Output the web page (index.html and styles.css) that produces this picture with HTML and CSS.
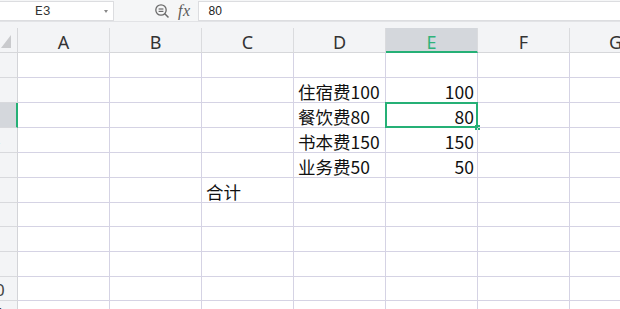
FILE: index.html
```html
<!DOCTYPE html>
<html lang="zh-CN">
<head>
<meta charset="utf-8">
<title>Sheet</title>
<link rel="stylesheet" href="styles.css">
</head>
<body>
<div class="toolbar">
  <div class="namebox"><span class="name">E3</span><span class="dd"></span></div>
  <svg class="zoomicon" width="16" height="16" viewBox="0 0 16 16">
    <circle cx="7" cy="7" r="5.2" fill="none" stroke="#6b6b6b" stroke-width="1.3"/>
    <line x1="4.6" y1="6" x2="9.4" y2="6" stroke="#6b6b6b" stroke-width="1.2"/>
    <line x1="4.6" y1="8.4" x2="9.4" y2="8.4" stroke="#6b6b6b" stroke-width="1.2"/>
    <line x1="10.8" y1="10.8" x2="14.5" y2="14.5" stroke="#6b6b6b" stroke-width="1.5"/>
  </svg>
  <span class="fx">fx</span>
  <div class="formula">80</div>
</div>
<div class="spacer"></div>
<div class="grid">
  <div class="ch corner"><span class="tri"></span></div>
  <div class="ch">A</div><div class="ch">B</div><div class="ch">C</div><div class="ch">D</div>
  <div class="ch sel">E</div><div class="ch">F</div><div class="ch">G</div>

  <div class="rh">1</div><div class="c"></div><div class="c"></div><div class="c"></div><div class="c"></div><div class="c"></div><div class="c"></div><div class="c"></div>
  <div class="rh">2</div><div class="c"></div><div class="c"></div><div class="c"></div><div class="c">住宿费100</div><div class="c n">100</div><div class="c"></div><div class="c"></div>
  <div class="rh rsel">3</div><div class="c"></div><div class="c"></div><div class="c"></div><div class="c">餐饮费80</div><div class="c n active">80<span class="box"></span><span class="handle"></span></div><div class="c"></div><div class="c"></div>
  <div class="rh">4</div><div class="c"></div><div class="c"></div><div class="c"></div><div class="c">书本费150</div><div class="c n">150</div><div class="c"></div><div class="c"></div>
  <div class="rh">5</div><div class="c"></div><div class="c"></div><div class="c"></div><div class="c">业务费50</div><div class="c n">50</div><div class="c"></div><div class="c"></div>
  <div class="rh">6</div><div class="c"></div><div class="c"></div><div class="c">合计</div><div class="c"></div><div class="c"></div><div class="c"></div><div class="c"></div>
  <div class="rh">7</div><div class="c"></div><div class="c"></div><div class="c"></div><div class="c"></div><div class="c"></div><div class="c"></div><div class="c"></div>
  <div class="rh">8</div><div class="c"></div><div class="c"></div><div class="c"></div><div class="c"></div><div class="c"></div><div class="c"></div><div class="c"></div>
  <div class="rh">9</div><div class="c"></div><div class="c"></div><div class="c"></div><div class="c"></div><div class="c"></div><div class="c"></div><div class="c"></div>
  <div class="rh">10</div><div class="c"></div><div class="c"></div><div class="c"></div><div class="c"></div><div class="c"></div><div class="c"></div><div class="c"></div>
  <div class="rh">11</div><div class="c"></div><div class="c"></div><div class="c"></div><div class="c"></div><div class="c"></div><div class="c"></div><div class="c"></div>
</div>
</body>
</html>
```
FILE: styles.css
```css
html, body {
  margin: 0;
  padding: 0;
  background: #ffffff;
  overflow: hidden;
  width: 620px;
  height: 309px;
}
body {
  font-family: "Noto Sans CJK SC", "Noto Sans", sans-serif;
}
.toolbar {
  display: flex;
  align-items: center;
  height: 21px;
  border-bottom: 1px solid #e2e3e6;
  background: #f5f6f7;
}
.namebox {
  position: relative;
  box-sizing: border-box;
  width: 116px;
  height: 20px;
  margin-left: -2px;
  margin-top: 1px;
  background: #ffffff;
  border: 1px solid #dcdde0;
  display: flex;
  align-items: center;
}
.name {
  margin-left: 36px;
  font-family: "Liberation Mono", monospace;
  font-size: 13px;
  color: #333;
}
.dd {
  position: absolute;
  right: 5px;
  top: 8px;
  width: 0;
  height: 0;
  border-left: 2.5px solid transparent;
  border-right: 2.5px solid transparent;
  border-top: 3px solid #888;
}
.zoomicon {
  margin-left: 40px;
  margin-top: 1px;
}
.fx {
  margin-left: 8px;
  font-family: "Liberation Serif", serif;
  font-style: italic;
  font-size: 16px;
  color: #5a5a5a;
  letter-spacing: 0.5px;
}
.formula {
  flex: 1;
  box-sizing: border-box;
  height: 20px;
  margin-left: 7px;
  margin-top: 1px;
  margin-right: -2px;
  background: #ffffff;
  border: 1px solid #dcdde0;
  padding-left: 10px;
  font-family: "Liberation Sans", sans-serif;
  font-size: 12px;
  line-height: 18px;
  color: #222;
}
.spacer {
  height: 6px;
  background: #f3f4f6;
}
.grid {
  display: grid;
  margin-left: -25px;
  grid-template-columns: 43px repeat(7, 92px);
  grid-template-rows: 25px 25px 25px 25px 25px 25px 25px 24px 25px 25px 24px 25px;
}
.grid > div {
  box-sizing: border-box;
}
.ch {
  background: #f3f4f6;
  border-right: 1px solid #dadbde;
  border-bottom: 1px solid #d6d7da;
  display: flex;
  align-items: center;
  justify-content: center;
  padding-top: 3px;
  font-family: "Noto Sans", sans-serif;
  font-size: 18px;
  color: #333;
}
.ch.sel {
  background: #d4d7dc;
  color: #2fb37a;
  border-bottom: 2px solid #25b076;
  padding-top: 4px;
}
.corner {
  position: relative;
  border-right: 1px solid #d6d7da;
}
.tri {
  position: absolute;
  right: 6px;
  bottom: 4px;
  width: 0;
  height: 0;
  border-left: 10px solid transparent;
  border-bottom: 13px solid #c9cacd;
}
.rh {
  background: #f3f4f6;
  border-right: 1px solid #d3d4d8;
  border-bottom: 1px solid #d8d9dd;
  display: flex;
  align-items: center;
  justify-content: center;
  padding-right: 2px;
  padding-top: 1px;
  font-family: "Noto Sans", sans-serif;
  font-size: 17px;
  color: #444;
}
.rh.rsel {
  background: #d4d7dc;
  border-right: 2px solid #25b076;
}
.c {
  position: relative;
  border-right: 1px solid #d5d3e4;
  border-bottom: 1px solid #d5d3e4;
  display: flex;
  align-items: center;
  padding-left: 4px;
  padding-top: 2px;
  font-size: 17.5px;
  color: #111;
  white-space: nowrap;
}
.c.n {
  justify-content: flex-end;
  padding-left: 0;
  padding-right: 3px;
}
.box {
  position: absolute;
  left: -1px;
  top: -1px;
  right: -1px;
  bottom: -1px;
  border: 2px solid #25b076;
}
.handle {
  position: absolute;
  right: -3px;
  bottom: -3px;
  width: 5px;
  height: 5px;
  background: #25b076;
}
```
